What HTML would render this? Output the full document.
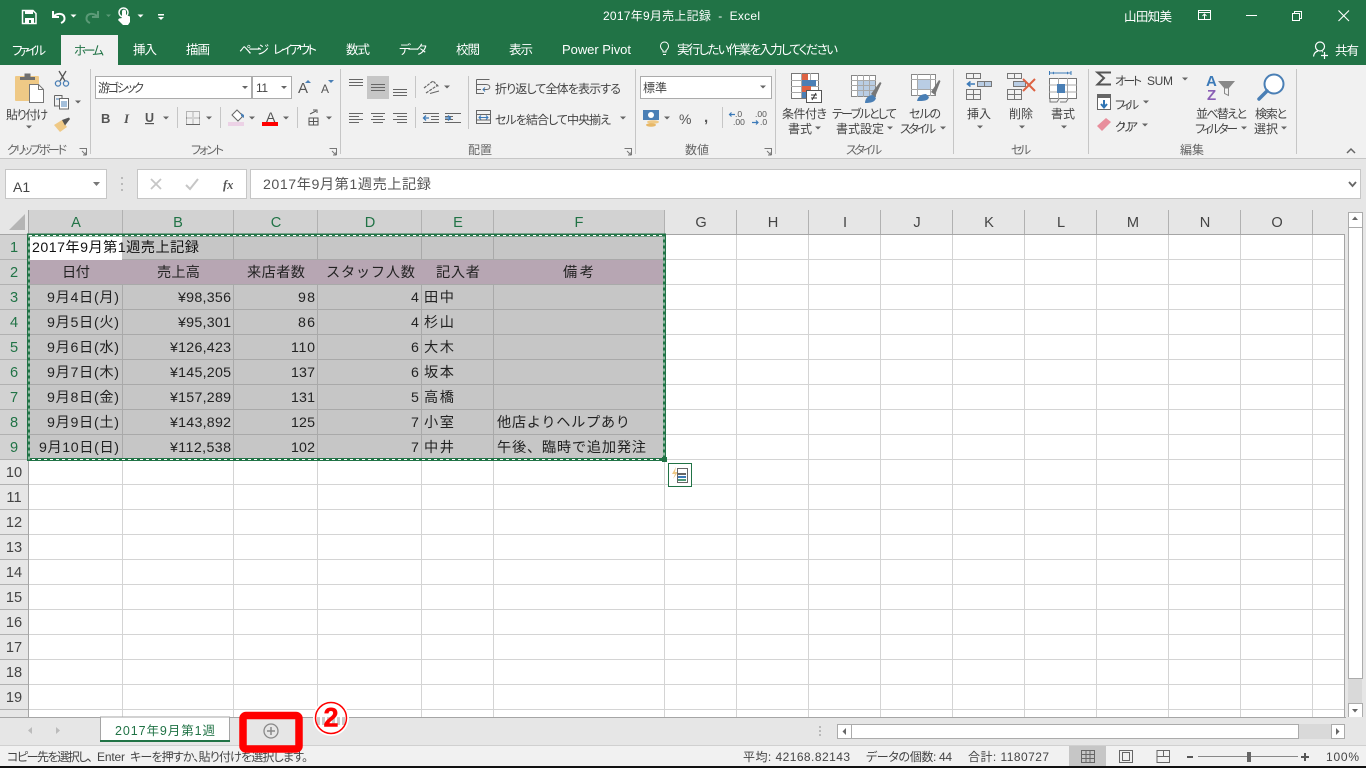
<!DOCTYPE html>
<html lang="ja"><head><meta charset="utf-8"><title>2017年9月売上記録 - Excel</title>
<style>
html,body{margin:0;padding:0;width:1366px;height:768px;overflow:hidden;background:#fff}
svg{display:block;position:absolute;left:0;top:0}
text{font-family:"Liberation Sans","Noto Sans CJK JP",sans-serif;white-space:pre}
.r{font-size:12px;fill:#444;font-feature-settings:"palt"}
.w{font-size:12.5px;fill:#fff;font-feature-settings:"palt"}
.c{font-size:14.2px;fill:#222}
.h{font-size:14.6px;fill:#444;text-anchor:middle}
.g{font-size:14.6px;fill:#217346;text-anchor:middle}
.s{font-size:12px;fill:#444;font-feature-settings:"palt"}
.l{font-size:12px;fill:#666;font-feature-settings:"palt"}
</style></head><body>
<svg width="1366" height="768" viewBox="0 0 1366 768" xmlns="http://www.w3.org/2000/svg">
<defs>
<polygon id="d" points="-3,-1.5 3,-1.5 0,1.5" fill="#666"/>
<polygon id="dw" points="-3,-1.5 3,-1.5 0,1.5" fill="#fff"/>
<g id="lc"><path d="M0.5 0.5H7.5V7M3 3L7 7M7 4V7H4" fill="none" stroke="#777" stroke-width="1"/></g>
</defs>

<!-- window chrome -->
<rect width="1366" height="65" fill="#217346"/>
<rect y="65" width="1366" height="93" fill="#f1f1f1"/>
<rect y="158" width="1366" height="1" fill="#c6c6c6"/>
<rect y="159" width="1366" height="51" fill="#e6e6e6"/>

<!-- QAT -->
<path d="M22.500 10.500H33L36 13.500V23.500H22.500Z" fill="none" stroke="#fff" stroke-width="1.500"/>
<rect x="25" y="10" width="8" height="4" fill="#fff"/><rect x="25" y="18" width="9" height="6" fill="#fff"/><rect x="29" y="20" width="2" height="3" fill="#217346"/>
<path d="M53 11V17H59M53.500 16.500C57 12.500 64 13 64.500 18C64.700 20 63.500 22 61 23" fill="none" stroke="#fff" stroke-width="2"/>
<use href="#dw" x="73.500" y="16"/>
<path d="M98 11V17H92M97.500 16.500C94 12.500 87 13 86.500 18C86.300 20 87.500 22 90 23" fill="none" stroke="#5b9a77" stroke-width="2"/>
<polygon points="106,14.500 111,14.500 108.500,17" fill="#5b9a77"/>
<path d="M122 18V11.500C122 9 126 9 126 11.500V15L130 16.500V22L128 25H123L118 20L119 18.500Z" fill="#fff"/><circle cx="123.500" cy="12.500" r="4.500" fill="none" stroke="#fff" stroke-width="1.500"/>
<use href="#dw" x="140.500" y="16"/>
<rect x="158" y="14" width="6" height="1.500" fill="#fff"/><polygon points="158,17 164,17 161,20" fill="#fff"/>

<text class="w" x="603" y="20" textLength="157" lengthAdjust="spacing" style="font-size:12px">2017年9月売上記録  -  Excel</text>
<text class="w" x="1124" y="21" textLength="48" lengthAdjust="spacing">山田知美</text>
<rect x="1198.500" y="10.500" width="12" height="9" fill="none" stroke="#fff"/><path d="M1198 12.500H1211M1204.500 19V14M1202.500 16L1204.500 14L1206.500 16" fill="none" stroke="#fff"/>
<rect x="1246" y="15" width="11" height="1" fill="#fff"/>
<rect x="1292.500" y="13.500" width="7" height="7" fill="none" stroke="#fff"/><path d="M1294.500 13.500V11.500H1301.500V18.500H1299.500" fill="none" stroke="#fff"/>
<path d="M1338.500 10.500L1349 21M1349 10.500L1338.500 21" stroke="#fff" stroke-width="1.100"/>

<!-- tabs -->
<rect x="61" y="35" width="57" height="30" fill="#f1f1f1"/>
<text class="w" x="12" y="55" textLength="34" lengthAdjust="spacing">ファイル</text>
<text class="w" x="74" y="55" textLength="30" lengthAdjust="spacing" style="fill:#217346">ホーム</text>
<text class="w" x="133" y="54" textLength="24" lengthAdjust="spacing">挿入</text>
<text class="w" x="186" y="54" textLength="24" lengthAdjust="spacing">描画</text>
<text class="w" x="239" y="54" textLength="30" lengthAdjust="spacing">ページ</text>
<text class="w" x="273" y="54" textLength="44" lengthAdjust="spacing">レイアウト</text>
<text class="w" x="346" y="54" textLength="24" lengthAdjust="spacing">数式</text>
<text class="w" x="399" y="54" textLength="28" lengthAdjust="spacing">データ</text>
<text class="w" x="456" y="54" textLength="24" lengthAdjust="spacing">校閲</text>
<text class="w" x="509" y="54" textLength="24" lengthAdjust="spacing">表示</text>
<text class="w" x="562" y="54" textLength="69" lengthAdjust="spacing" style="font-size:13px">Power Pivot</text>
<path d="M663 50.500C661 49 660.500 47.500 660.500 46C660.500 43.500 662.500 42 664.500 42C666.500 42 668.500 43.500 668.500 46C668.500 47.500 668 49 666 50.500V52H663ZM663 54.500H666" fill="none" stroke="#fff"/>
<text class="w" x="677" y="54" textLength="161" lengthAdjust="spacing">実行したい作業を入力してください</text>
<circle cx="1320" cy="46.500" r="4.500" fill="none" stroke="#fff" stroke-width="1.200"/><path d="M1313.500 56.500C1314 53 1316 51.500 1318 51M1322 51.500L1323 52M1324.500 52V59M1321 55.500H1328" fill="none" stroke="#fff" stroke-width="1.200"/>
<text class="w" x="1335" y="55" textLength="24" lengthAdjust="spacing">共有</text>

<!-- ribbon separators -->
<path d="M90.500 69V154M340.500 69V154M635.500 69V154M775.500 69V154M953.500 69V154M1088.500 69V154M1296.500 69V154M468.500 76V129" stroke="#c6c6c6"/>
<path d="M177.500 107V128M220.500 107V128M297.500 107V128M415.500 76V98M415.500 107V128M722.500 107V128" stroke="#c6c6c6"/>

<!-- clipboard -->
<rect x="15" y="76" width="24" height="25" rx="1" fill="#efc986"/>
<path d="M20 80H35V77H30.500V73.500H24.500V77H20Z" fill="#6f6f6f"/>
<path d="M29.500 84.500H38.500L43.500 89.500V102.500H29.500Z" fill="#fff" stroke="#777"/><path d="M38.500 84.500V89.500H43.500" fill="none" stroke="#777"/>
<text class="r" x="6" y="119" textLength="42" lengthAdjust="spacing">貼り付け</text>
<use href="#d" x="29" y="127"/>
<path d="M59 71L65 81M66 71L60 81" stroke="#555" stroke-width="1.300"/><circle cx="58" cy="83.500" r="2.600" fill="none" stroke="#4a7fb5" stroke-width="1.300"/><circle cx="66" cy="83.500" r="2.600" fill="none" stroke="#4a7fb5" stroke-width="1.300"/>
<path d="M54.500 95.500H62V98M54.500 95.500V106H59" fill="none" stroke="#666"/><rect x="59.500" y="98.500" width="9" height="10.500" fill="#fff" stroke="#666"/><path d="M61 102H67M61 104H67M61 106H67M56 99H59" stroke="#4a7fb5"/>
<use href="#d" x="78" y="102"/>
<path d="M54 125L62 120L67 127L60 132Z" fill="#efc986"/><path d="M62 120L69 117.500L70 119L65 125.500Z" fill="#555"/>
<text class="l" x="7" y="154" textLength="60" lengthAdjust="spacing">クリップボード</text>
<use href="#lc" x="79" y="148"/>

<!-- font -->
<rect x="95.500" y="76.500" width="156" height="22" fill="#fff" stroke="#ababab"/>
<rect x="252.500" y="76.500" width="39" height="22" fill="#fff" stroke="#ababab"/>
<text class="r" x="98" y="92" textLength="46" lengthAdjust="spacing">游ゴシック</text>
<text class="r" x="256" y="92" textLength="12" lengthAdjust="spacing">11</text>
<use href="#d" x="245" y="87.500"/><use href="#d" x="284" y="87.500"/>
<text x="298" y="93" style="font-size:15px;fill:#555">A</text><polygon points="305,83 311,83 308,80" fill="#4a7fb5"/>
<text x="321" y="93" style="font-size:12px;fill:#555">A</text><polygon points="328,80 334,80 331,83" fill="#4a7fb5"/>
<text x="101" y="123" style="font-size:13px;font-weight:bold;fill:#555">B</text>
<text x="124" y="123" style="font-size:13px;font-style:italic;font-family:'Liberation Serif',serif;font-weight:bold;fill:#555">I</text>
<text x="145" y="122" style="font-size:12.500px;font-weight:bold;fill:#555">U</text><rect x="145" y="123" width="9" height="1.200" fill="#555"/>
<use href="#d" x="166" y="118"/>
<path d="M186.500 111.500H199.500V124.500H186.500ZM193 111.500V124.500M186.500 118H199.500" fill="none" stroke="#777" stroke-dasharray="1 1"/><rect x="186" y="124" width="14" height="1" fill="#666"/>
<use href="#d" x="209" y="118"/>
<path d="M232 115L237 110L243 116L238 121Z" fill="#fff" stroke="#666"/><path d="M241 113L244 115L244 118L241 116Z" fill="#4a7fb5"/><rect x="228" y="122" width="16" height="4" fill="#ecd2e6"/>
<use href="#d" x="252" y="118"/>
<text x="266" y="122" style="font-size:14px;fill:#555">A</text><rect x="262" y="122" width="16" height="4" fill="#f00"/>
<use href="#d" x="286" y="118"/>
<path d="M310 114L316 111M313 110H317V113M309 118H318V125H309ZM313.500 118V125M309 121.500H318" fill="none" stroke="#555"/>
<use href="#d" x="329" y="118"/>
<text class="l" x="191" y="154" textLength="33" lengthAdjust="spacing">フォント</text>
<use href="#lc" x="329" y="148"/>

<!-- alignment -->
<rect x="367" y="76" width="22" height="23" fill="#c6c6c6"/>
<path d="M349 79.500H363M349 82.500H363M349 85.500H363M371 84.500H385M371 87.500H385M371 90.500H385M393 89.500H407M393 92.500H407M393 95.500H407" stroke="#666"/>
<path d="M424 88L433 81L439 87M426 93L438 85" fill="none" stroke="#666" stroke-width="1.200" stroke-dasharray="3 1"/><path d="M430 93.500L439 91" stroke="#666"/>
<use href="#d" x="447" y="87"/>
<path d="M349 113.500H363M349 116.500H359M349 119.500H363M349 122.500H359M371 113.500H385M373 116.500H383M371 119.500H385M373 122.500H383M393 113.500H407M397 116.500H407M393 119.500H407M397 122.500H407" stroke="#666"/>
<path d="M423 113.500H439M431 116.500H439M431 119.500H439M423 122.500H439M445 113.500H461M445 116.500H453M445 119.500H453M445 122.500H461" stroke="#666"/>
<path d="M429 118H423.500M426 115.500L423.500 118L426 120.500M445 118H450.500M448 115.500L450.500 118L448 120.500" fill="none" stroke="#3c7ab8" stroke-width="1.300"/>
<path d="M476.500 79.500H489.500M476.500 79.500V93.500H484M476.500 84.500H486C491 84.500 491 89.500 486.500 89.500H483M476.500 89.500H481" fill="none" stroke="#666"/><path d="M485 87.500L483 89.500L485 91.500" fill="none" stroke="#3c7ab8"/>
<text class="r" x="495" y="93" textLength="126" lengthAdjust="spacing">折り返して全体を表示する</text>
<rect x="476.500" y="110.500" width="14" height="13" fill="none" stroke="#666"/><path d="M476.500 114.500H490.500M476.500 120H490.500" stroke="#666"/><path d="M479 117.500H488M481 115.500L479 117.500L481 119.500M486 115.500L488 117.500L486 119.500" fill="none" stroke="#3c7ab8"/>
<text class="r" x="495" y="124" textLength="116" lengthAdjust="spacing">セルを結合して中央揃え</text>
<use href="#d" x="623" y="118"/>
<text class="l" x="468" y="154" textLength="24" lengthAdjust="spacing">配置</text>
<use href="#lc" x="624" y="148"/>

<!-- number -->
<rect x="640.500" y="76.500" width="131" height="22" fill="#fff" stroke="#ababab"/>
<text class="r" x="643" y="92" textLength="24" lengthAdjust="spacing">標準</text>
<use href="#d" x="763" y="87"/>
<rect x="643" y="110" width="16" height="10" fill="#4a7fb5"/><circle cx="651" cy="115" r="3" fill="#fff"/><ellipse cx="653" cy="122" rx="6" ry="1.700" fill="#efc986"/><ellipse cx="651" cy="125" rx="5" ry="1.700" fill="#e7b868"/>
<use href="#d" x="667" y="118"/>
<text x="679" y="124" style="font-size:14px;fill:#555">%</text>
<text x="704" y="122" style="font-size:15px;font-weight:bold;fill:#555">,</text>
<text x="735" y="117" style="font-size:8.500px;fill:#555">.0</text><text x="733" y="125" style="font-size:8.500px;fill:#555">.00</text>
<path d="M735 114.500H729.500M731.500 112.500L729.500 114.500L731.500 116.500" fill="none" stroke="#3c7ab8" stroke-width="1.200"/>
<text x="755" y="117" style="font-size:8.500px;fill:#555">.00</text><text x="760" y="125" style="font-size:8.500px;fill:#555">.0</text>
<path d="M752 122.500H758M756 120.500L758 122.500L756 124.500" fill="none" stroke="#3c7ab8" stroke-width="1.200"/>
<text class="l" x="685" y="154" textLength="24" lengthAdjust="spacing">数値</text>
<use href="#lc" x="764" y="148"/>

<!-- styles -->
<rect x="791.500" y="73.500" width="27" height="25" fill="#fff" stroke="#777"/>
<path d="M791 80.500H819M791 86.500H819M791 92.500H819M801.500 73V98M810.500 73V98" stroke="#a8a8a8"/>
<rect x="802" y="74" width="6" height="6" fill="#dd6242"/><rect x="802" y="80" width="14" height="6" fill="#4a7fb5"/><rect x="802" y="86" width="9" height="6" fill="#dd6242"/><rect x="802" y="92" width="5" height="6" fill="#4a7fb5"/>
<rect x="806.500" y="90.500" width="15" height="12" fill="#fff" stroke="#555"/>
<path d="M811 95H817M811 98H817M816 93L812 100" stroke="#333"/>
<text class="r" x="782" y="118" textLength="45" lengthAdjust="spacing">条件付き</text>
<text class="r" x="788" y="133" textLength="24" lengthAdjust="spacing">書式</text><use href="#d" x="818" y="128"/>
<rect x="851.500" y="75.500" width="24" height="21" fill="#fff" stroke="#888"/><rect x="858" y="80" width="17" height="16" fill="#b9cde4"/>
<path d="M851 80.500H876M851 85.500H876M851 90.500H876M857.500 75V97M863.500 75V97M869.500 75V97" stroke="#a8a8a8"/>
<path d="M871 94L880 82L881.500 83L875 97Z" fill="#777"/><path d="M865 103C865 98 869 95 873 95L876 98C875 102 871 103 865 103Z" fill="#4a7fb5"/>
<text class="r" x="832" y="118" textLength="65" lengthAdjust="spacing">テーブルとして</text>
<text class="r" x="836" y="133" textLength="48" lengthAdjust="spacing">書式設定</text><use href="#d" x="890" y="128"/>
<rect x="911.500" y="74.500" width="24" height="21" fill="#fff" stroke="#888"/><rect x="917" y="79" width="13" height="10" fill="#b9cde4"/>
<path d="M911 79.500H936M911 89.500H936M917.500 74V96M930.500 74V96" stroke="#a8a8a8"/>
<path d="M931 92L939 80L940.500 81L935 95Z" fill="#777"/><path d="M917 101C918 96 922 94 926 94L929 97C928 101 924 101 917 101Z" fill="#4a7fb5"/>
<text class="r" x="909" y="118" textLength="32" lengthAdjust="spacing">セルの</text>
<text class="r" x="900" y="133" textLength="36" lengthAdjust="spacing">スタイル</text><use href="#d" x="943" y="128"/>
<text class="l" x="846" y="154" textLength="36" lengthAdjust="spacing">スタイル</text>

<!-- cells -->
<path d="M966.500 73.500H980.500V78.500H966.500ZM973.500 73.500V78.500M966.500 89.500H980.500V99.500H966.500ZM973.500 89.500V99.500M966.500 94.500H980.500" fill="none" stroke="#777"/>
<rect x="977.500" y="81.500" width="14" height="5" fill="#b9cde4" stroke="#777"/><path d="M984.500 81.500V86.500" stroke="#777"/>
<path d="M975 84H968M970.500 81.500L967.500 84L970.500 86.500" fill="none" stroke="#3c7ab8" stroke-width="1.600"/>
<text class="r" x="967" y="118" textLength="24" lengthAdjust="spacing">挿入</text><use href="#d" x="980" y="127"/>
<path d="M1007.500 73.500H1021.500V78.500H1007.500ZM1014.500 73.500V78.500M1007.500 89.500H1021.500V99.500H1007.500ZM1014.500 89.500V99.500M1007.500 94.500H1021.500" fill="none" stroke="#777"/>
<rect x="1013.500" y="81.500" width="12" height="5" fill="#b9cde4" stroke="#777"/>
<path d="M1023 79L1035 91M1035 79L1023 91" stroke="#dd6242" stroke-width="2"/>
<text class="r" x="1009" y="118" textLength="24" lengthAdjust="spacing">削除</text><use href="#d" x="1022" y="127"/>
<path d="M1049.500 73H1071M1049.500 71V75M1071 71V75" stroke="#3c7ab8"/><path d="M1052 73L1054 71.500V74.500ZM1069 73L1067 71.500V74.500Z" fill="#3c7ab8"/>
<rect x="1049.500" y="78.500" width="27" height="20" fill="#fff" stroke="#777"/>
<path d="M1049 85H1077M1049 92H1077M1058.500 78V99M1067.500 78V99" stroke="#aaa"/><rect x="1057" y="84" width="8" height="9" fill="#4a7fb5"/>
<path d="M1050 99V102H1057L1059 99M1060 102H1066L1068 99" fill="none" stroke="#777"/>
<text class="r" x="1051" y="118" textLength="24" lengthAdjust="spacing">書式</text><use href="#d" x="1064" y="127"/>
<text class="l" x="1011" y="154" textLength="20" lengthAdjust="spacing">セル</text>

<!-- editing -->
<path d="M1111 72.500H1097.500L1104 78L1097.500 84.500H1111" fill="none" stroke="#555" stroke-width="2"/>
<text class="r" x="1115" y="85" textLength="27" lengthAdjust="spacing">オート</text>
<text class="r" x="1147" y="85" textLength="26" lengthAdjust="spacing">SUM</text><use href="#d" x="1185" y="79"/>
<rect x="1097.500" y="94.500" width="13" height="15" fill="#fff" stroke="#666"/><rect x="1097" y="94" width="14" height="4" fill="#666"/>
<path d="M1104 100V107M1101 104L1104 107.500L1107 104" fill="none" stroke="#2f75b5" stroke-width="2"/>
<text class="r" x="1115" y="109" textLength="24" lengthAdjust="spacing">フィル</text><use href="#d" x="1146" y="102"/>
<path d="M1097 126L1106 118L1111 122L1102 131Z" fill="#e88e9c"/>
<text class="r" x="1115" y="131" textLength="23" lengthAdjust="spacing">クリア</text><use href="#d" x="1145" y="125"/>
<text x="1206" y="86" style="font-size:15px;font-weight:bold;fill:#3c7ab8">A</text>
<text x="1207" y="100" style="font-size:15px;font-weight:bold;fill:#8a5fb5">Z</text>
<path d="M1218 81H1235L1229 88H1224Z" fill="#888"/><path d="M1224.500 88H1228.500V95.500L1224.500 93.500Z" fill="none" stroke="#888"/>
<text class="r" x="1196" y="118" textLength="51" lengthAdjust="spacing">並べ替えと</text>
<text class="r" x="1195" y="133" textLength="43" lengthAdjust="spacing">フィルター</text><use href="#d" x="1244" y="128"/>
<circle cx="1274" cy="84" r="9.500" fill="#fff" stroke="#4a7fb5" stroke-width="2"/><path d="M1267 91L1259 99" stroke="#4a7fb5" stroke-width="3.500" stroke-linecap="round"/>
<text class="r" x="1255" y="118" textLength="32" lengthAdjust="spacing">検索と</text>
<text class="r" x="1254" y="133" textLength="24" lengthAdjust="spacing">選択</text><use href="#d" x="1284" y="128"/>
<text class="l" x="1180" y="154" textLength="24" lengthAdjust="spacing">編集</text>
<path d="M1347 153L1351 149L1355 153" fill="none" stroke="#666" stroke-width="1.500"/>

<!-- formula bar -->
<rect x="5.500" y="169.500" width="101" height="29" fill="#fff" stroke="#c6c6c6"/>
<text x="13" y="192" style="font-size:14px;fill:#444">A1</text>
<polygon points="93,182 100,182 96.500,186" fill="#777"/>
<path d="M122 177V179M122 183V185M122 189V191" stroke="#aaa" stroke-width="1.500"/>
<rect x="137.500" y="169.500" width="109" height="29" fill="#fff" stroke="#c6c6c6"/>
<path d="M151 179L161 189M161 179L151 189" stroke="#c6c6c6" stroke-width="1.800"/>
<path d="M186 185L190 189L198 179" fill="none" stroke="#c6c6c6" stroke-width="2"/>
<text x="223" y="189" style="font-size:12.500px;font-style:italic;font-weight:bold;font-family:'Liberation Serif',serif;fill:#555">fx</text>
<rect x="250.500" y="169.500" width="1110" height="29" fill="#fff" stroke="#c6c6c6"/>
<text x="263" y="189" textLength="168" lengthAdjust="spacing" style="font-size:14.200px;fill:#555">2017年9月第1週売上記録</text>
<path d="M1349 182L1352.500 186L1356 182" fill="none" stroke="#666" stroke-width="1.800"/>

<!-- grid bg + headers -->
<rect y="210" width="1366" height="507" fill="#e6e6e6"/>
<rect x="29" y="235" width="1315" height="482" fill="#fff"/>
<path d="M9 230H25V214Z" fill="#b5b5b5"/>
<rect x="29" y="210" width="636" height="24" fill="#d2d2d2"/>
<rect x="0" y="235" width="28" height="225" fill="#d2d2d2"/>
<path d="M122.500 210V234M233.500 210V234M317.500 210V234M421.500 210V234M493.500 210V234M664.500 210V234M736.500 210V234M808.500 210V234M880.500 210V234M952.500 210V234M1024.500 210V234M1096.500 210V234M1168.500 210V234M1240.500 210V234M1312.500 210V234" stroke="#b1b1b1"/>
<path d="M0 259.500H28M0 284.500H28M0 309.500H28M0 334.500H28M0 359.500H28M0 384.500H28M0 409.500H28M0 434.500H28M0 459.500H28M0 484.500H28M0 509.500H28M0 534.500H28M0 559.500H28M0 584.500H28M0 609.500H28M0 634.500H28M0 659.500H28M0 684.500H28M0 709.500H28" stroke="#b1b1b1"/>
<rect x="0" y="234" width="1344" height="1" fill="#a5a5a5"/>
<rect x="28" y="210" width="1" height="507" fill="#a5a5a5"/>
<rect x="1344" y="234" width="1" height="483" fill="#a5a5a5"/>

<!-- gridlines -->
<path d="M29 484.500H1344M29 509.500H1344M29 534.500H1344M29 559.500H1344M29 584.500H1344M29 609.500H1344M29 634.500H1344M29 659.500H1344M29 684.500H1344M29 709.500H1344M665 259.500H1344M665 284.500H1344M665 309.500H1344M665 334.500H1344M665 359.500H1344M665 384.500H1344M665 409.500H1344M665 434.500H1344M665 459.500H1344" stroke="#d4d4d4"/>
<path d="M122.500 460V717M233.500 460V717M317.500 460V717M421.500 460V717M493.500 460V717M664.500 460V717M736.500 235V717M808.500 235V717M880.500 235V717M952.500 235V717M1024.500 235V717M1096.500 235V717M1168.500 235V717M1240.500 235V717M1312.500 235V717" stroke="#d4d4d4"/>

<!-- selection -->
<rect x="29" y="235" width="636" height="225" fill="#c6c6c6"/>
<rect x="30" y="236" width="92" height="24" fill="#fff"/>
<rect x="29" y="260" width="636" height="25" fill="#b7a6b3"/>
<path d="M122 259.500H664M29 284.500H664M29 309.500H664M29 334.500H664M29 359.500H664M29 384.500H664M29 409.500H664M29 434.500H664" stroke="#a9a9a9"/>
<path d="M122.500 285V459M233.500 285V459M317.500 285V459M421.500 285V459M493.500 285V459M233.500 235V260M317.500 235V260M421.500 235V260M493.500 235V260" stroke="#a9a9a9"/>
<rect x="28.500" y="235" width="636" height="224.500" fill="none" stroke="#217346" stroke-width="3"/>
<rect x="29" y="235.500" width="635" height="224" fill="none" stroke="#fff" stroke-width="1" stroke-dasharray="3 3"/>
<rect x="662" y="457" width="5" height="5" fill="#217346"/>

<!-- headers text -->
<text class="g" x="76" y="227">A</text><text class="g" x="178" y="227">B</text><text class="g" x="276" y="227">C</text><text class="g" x="370" y="227">D</text><text class="g" x="458" y="227">E</text><text class="g" x="579" y="227">F</text>
<text class="h" x="701" y="227">G</text><text class="h" x="773" y="227">H</text><text class="h" x="845" y="227">I</text><text class="h" x="917" y="227">J</text><text class="h" x="989" y="227">K</text><text class="h" x="1061" y="227">L</text><text class="h" x="1133" y="227">M</text><text class="h" x="1205" y="227">N</text><text class="h" x="1277" y="227">O</text>
<text class="g" x="14" y="252">1</text><text class="g" x="14" y="277">2</text><text class="g" x="14" y="302">3</text><text class="g" x="14" y="327">4</text><text class="g" x="14" y="352">5</text><text class="g" x="14" y="377">6</text><text class="g" x="14" y="402">7</text><text class="g" x="14" y="427">8</text><text class="g" x="14" y="452">9</text>
<text class="h" x="14" y="477">10</text><text class="h" x="14" y="502">11</text><text class="h" x="14" y="527">12</text><text class="h" x="14" y="552">13</text><text class="h" x="14" y="577">14</text><text class="h" x="14" y="602">15</text><text class="h" x="14" y="627">16</text><text class="h" x="14" y="652">17</text><text class="h" x="14" y="677">18</text><text class="h" x="14" y="702">19</text><text class="h" x="14" y="727">20</text>

<!-- cells -->
<text class="c" x="32" y="252" textLength="167" lengthAdjust="spacing" style="fill:#111">2017年9月第1週売上記録</text>
<text class="c" x="62" y="277" textLength="28" lengthAdjust="spacing">日付</text>
<text class="c" x="157" y="277" textLength="43" lengthAdjust="spacing">売上高</text>
<text class="c" x="247" y="277" textLength="58" lengthAdjust="spacing">来店者数</text>
<text class="c" x="326" y="277" textLength="89" lengthAdjust="spacing">スタッフ人数</text>
<text class="c" x="436" y="277" textLength="44" lengthAdjust="spacing">記入者</text>
<text class="c" x="563" y="277" textLength="31" lengthAdjust="spacing">備考</text>

<text class="c" x="47" y="302" textLength="72" lengthAdjust="spacing">9月4日(月)</text>
<text class="c" x="47" y="327" textLength="72" lengthAdjust="spacing">9月5日(火)</text>
<text class="c" x="47" y="352" textLength="72" lengthAdjust="spacing">9月6日(水)</text>
<text class="c" x="47" y="377" textLength="72" lengthAdjust="spacing">9月7日(木)</text>
<text class="c" x="47" y="402" textLength="72" lengthAdjust="spacing">9月8日(金)</text>
<text class="c" x="47" y="427" textLength="72" lengthAdjust="spacing">9月9日(土)</text>
<text class="c" x="39" y="452" textLength="80" lengthAdjust="spacing">9月10日(日)</text>

<text class="c" x="178" y="302" textLength="53" lengthAdjust="spacing">¥98,356</text>
<text class="c" x="178" y="327" textLength="53" lengthAdjust="spacing">¥95,301</text>
<text class="c" x="170" y="352" textLength="61" lengthAdjust="spacing">¥126,423</text>
<text class="c" x="170" y="377" textLength="61" lengthAdjust="spacing">¥145,205</text>
<text class="c" x="170" y="402" textLength="61" lengthAdjust="spacing">¥157,289</text>
<text class="c" x="170" y="427" textLength="61" lengthAdjust="spacing">¥143,892</text>
<text class="c" x="170" y="452" textLength="61" lengthAdjust="spacing">¥112,538</text>

<text class="c" x="298" y="302" textLength="17" lengthAdjust="spacing">98</text>
<text class="c" x="298" y="327" textLength="17" lengthAdjust="spacing">86</text>
<text class="c" x="291" y="352" textLength="24" lengthAdjust="spacing">110</text>
<text class="c" x="291" y="377" textLength="24" lengthAdjust="spacing">137</text>
<text class="c" x="291" y="402" textLength="24" lengthAdjust="spacing">131</text>
<text class="c" x="291" y="427" textLength="24" lengthAdjust="spacing">125</text>
<text class="c" x="291" y="452" textLength="24" lengthAdjust="spacing">102</text>

<text class="c" x="411" y="302">4</text><text class="c" x="411" y="327">4</text><text class="c" x="411" y="352">6</text><text class="c" x="411" y="377">6</text><text class="c" x="411" y="402">5</text><text class="c" x="411" y="427">7</text><text class="c" x="411" y="452">7</text>

<text class="c" x="424" y="302" textLength="30" lengthAdjust="spacing">田中</text>
<text class="c" x="424" y="327" textLength="30" lengthAdjust="spacing">杉山</text>
<text class="c" x="424" y="352" textLength="30" lengthAdjust="spacing">大木</text>
<text class="c" x="424" y="377" textLength="30" lengthAdjust="spacing">坂本</text>
<text class="c" x="424" y="402" textLength="30" lengthAdjust="spacing">高橋</text>
<text class="c" x="424" y="427" textLength="30" lengthAdjust="spacing">小室</text>
<text class="c" x="424" y="452" textLength="30" lengthAdjust="spacing">中井</text>

<text class="c" x="497" y="427" textLength="133" lengthAdjust="spacing">他店よりヘルプあり</text>
<text class="c" x="497" y="452" textLength="149" lengthAdjust="spacing">午後、臨時で追加発注</text>

<!-- paste options -->
<rect x="668.500" y="463.500" width="23" height="23" fill="#fff" stroke="#217346"/>
<path d="M676 467L672 474H675L673 479L678 472H675Z" fill="#efc986"/>
<rect x="677.500" y="468.500" width="10" height="14" fill="#fff" stroke="#666"/>
<rect x="678" y="473" width="8" height="2" fill="#666"/><rect x="678" y="476" width="8" height="2" fill="#3c7ab8"/><rect x="678" y="479" width="8" height="2" fill="#4f9a76"/>

<!-- vertical scrollbar -->
<rect x="1346" y="210" width="20" height="507" fill="#e6e6e6"/>
<rect x="1348" y="212" width="14" height="505" fill="#d9d9d9"/>
<rect x="1348.500" y="212.500" width="14" height="15" fill="#fff" stroke="#ababab"/>
<polygon points="1352,220 1358,220 1355,216.500" fill="#666"/>
<rect x="1348.500" y="227.500" width="14" height="451" fill="#fff" stroke="#ababab"/>
<rect x="1348.500" y="703.500" width="14" height="14" fill="#fff" stroke="#ababab"/>
<polygon points="1352,709 1358,709 1355,712.500" fill="#666"/>

<!-- sheet tabs bar -->
<rect y="717" width="1366" height="28" fill="#e6e6e6"/>
<rect x="0" y="717" width="1346" height="1" fill="#a5a5a5"/>
<polygon points="32,727 32,734 28,730.500" fill="#bbb"/><polygon points="56,727 56,734 60,730.500" fill="#bbb"/>
<rect x="100.500" y="717" width="129" height="24" fill="#fff" stroke="#a5a5a5"/>
<rect x="100" y="740" width="130" height="2" fill="#217346"/>
<text x="115" y="735" textLength="100" lengthAdjust="spacing" style="font-size:12.500px;fill:#217346">2017年9月第1週</text>
<circle cx="271" cy="731" r="7" fill="none" stroke="#888" stroke-width="1.300"/><path d="M267 731H275M271 727V735" stroke="#888" stroke-width="1.500"/>

<!-- horizontal scrollbar -->
<path d="M820 726V728M820 730V732M820 734V736" stroke="#aaa" stroke-width="1.500"/>
<rect x="837" y="724" width="508" height="15" fill="#d9d9d9"/>
<rect x="837.500" y="724.500" width="14" height="14" fill="#fff" stroke="#ababab"/>
<polygon points="846,728 846,735 842.500,731.500" fill="#666"/>
<rect x="851.500" y="724.500" width="447" height="14" fill="#fff" stroke="#ababab"/>
<rect x="1331.500" y="724.500" width="13" height="14" fill="#fff" stroke="#ababab"/>
<polygon points="1336,728 1336,735 1339.500,731.500" fill="#666"/>

<!-- status bar -->
<rect y="745" width="1366" height="21" fill="#f1f1f1"/>
<rect y="745" width="1366" height="1" fill="#d0d0d0"/>
<rect y="766" width="1366" height="2" fill="#111"/>
<text class="s" x="7" y="761" textLength="86" lengthAdjust="spacing">コピー先を選択し、</text>
<text class="s" x="97" y="761" textLength="28" lengthAdjust="spacing">Enter</text>
<text class="s" x="130" y="761" textLength="178" lengthAdjust="spacing">キーを押すか、貼り付けを選択します。</text>
<text class="s" x="743" y="761" textLength="107" lengthAdjust="spacing">平均: 42168.82143</text>
<text class="s" x="866" y="761" textLength="86" lengthAdjust="spacing">データの個数: 44</text>
<text class="s" x="968" y="761" textLength="81" lengthAdjust="spacing">合計: 1180727</text>
<rect x="1069" y="746" width="37" height="20" fill="#c6c6c6"/>
<path d="M1081.500 750.500H1094.500V762.500H1081.500ZM1081.500 754.500H1094.500M1081.500 758.500H1094.500M1086 750.500V762.500M1090 750.500V762.500" fill="none" stroke="#666"/>
<rect x="1119.500" y="750.500" width="13" height="12" fill="none" stroke="#666"/><rect x="1122.500" y="752.500" width="7" height="8" fill="none" stroke="#666"/>
<path d="M1157 750.500H1169.500V762.500H1157ZM1163.500 750.500V756.500M1157 756.500H1169.500" fill="none" stroke="#666"/>
<rect x="1187" y="756" width="6" height="2" fill="#555"/>
<rect x="1198" y="756" width="100" height="1" fill="#888"/>
<rect x="1247" y="752" width="4" height="10" fill="#666"/>
<path d="M1301 757H1309M1305 753V761" stroke="#555" stroke-width="2"/>
<text class="s" x="1326" y="761" textLength="33" lengthAdjust="spacing">100%</text>

<!-- annotation overlays -->
<rect x="243" y="715.500" width="56" height="33.500" rx="3" fill="none" stroke="#f00" stroke-width="7.500"/>
<circle cx="331" cy="718" r="18" fill="#fff"/>
<path d="M317 721H345" stroke="#aaa" stroke-width="8" stroke-dasharray="3 2" opacity=".6"/>
<circle cx="331" cy="718" r="15.500" fill="none" stroke="#f00" stroke-width="1.500"/>
<text x="331" y="726.500" text-anchor="middle" style="font-size:27px;font-weight:bold;fill:#f00;stroke:#f00;stroke-width:.5">2</text>
</svg>
</body></html>
